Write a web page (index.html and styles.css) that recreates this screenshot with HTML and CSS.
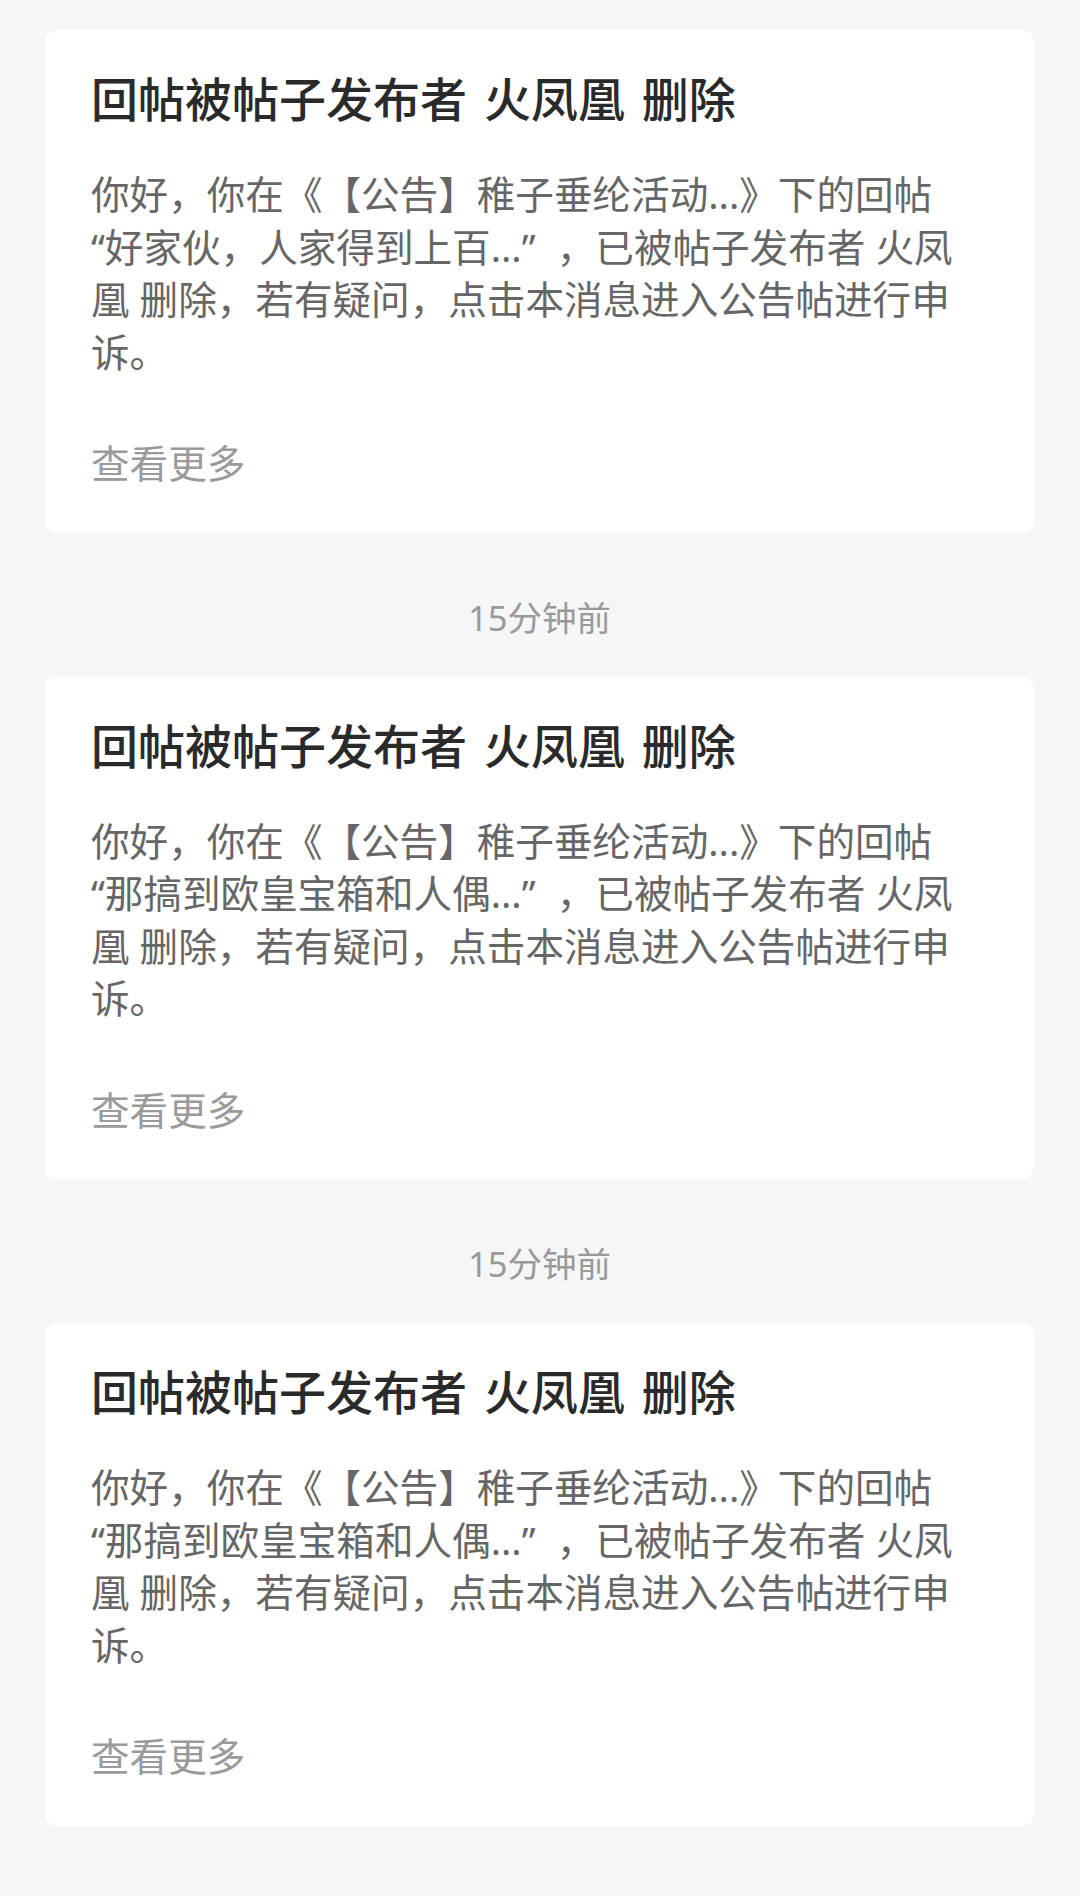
FILE: index.html
```html
<!DOCTYPE html>
<html lang="zh-CN">
<head>
<meta charset="utf-8">
<title>消息</title>
<link rel="stylesheet" href="styles.css">
</head>
<body>
<main class="list">
  <section class="card">
    <h2 class="card-title">回帖被帖子发布者 火凤凰 删除</h2>
    <p class="card-body">你好，你在《【公告】稚子垂纶活动...》下的回帖“好家伙，人家得到上百...<span class="cq">”</span>，已被帖子发布者 火凤凰 删除，若有疑问，点击本消息进入公告帖进行申诉。</p>
    <div class="card-more">查看更多</div>
  </section>
  <div class="time">15分钟前</div>
  <section class="card">
    <h2 class="card-title">回帖被帖子发布者 火凤凰 删除</h2>
    <p class="card-body">你好，你在《【公告】稚子垂纶活动...》下的回帖“那搞到欧皇宝箱和人偶...<span class="cq">”</span>，已被帖子发布者 火凤凰 删除，若有疑问，点击本消息进入公告帖进行申诉。</p>
    <div class="card-more">查看更多</div>
  </section>
  <div class="time">15分钟前</div>
  <section class="card">
    <h2 class="card-title">回帖被帖子发布者 火凤凰 删除</h2>
    <p class="card-body">你好，你在《【公告】稚子垂纶活动...》下的回帖“那搞到欧皇宝箱和人偶...<span class="cq">”</span>，已被帖子发布者 火凤凰 删除，若有疑问，点击本消息进入公告帖进行申诉。</p>
    <div class="card-more">查看更多</div>
  </section>
</main>
</body>
</html>
```

FILE: styles.css
```css
html, body {
  margin: 0;
  padding: 0;
  background: #f5f6f8;
}

body {
  font-family: "Noto Sans", "Noto Sans CJK SC", sans-serif;
  width: 1080px;
  min-height: 1896px;
}

.list {
  display: flex;
  flex-direction: column;
  padding: 30px 46px 0 45px;
}

.card {
  background: #ffffff;
  border-radius: 12px;
  padding: 36px 71px 43px 46px;
}

.card-title {
  margin: 0;
  font-size: 47px;
  line-height: 66px;
  font-weight: 500;
  color: #2a2a2a;
  word-spacing: 0.1em;
}

.card-body {
  margin: 36px 0 0 0;
  font-size: 38.6px;
  line-height: 52.5px;
  color: #666666;
  text-spacing-trim: space-all;
}

.cq {
  padding-right: 0.55em;
}

.card-more {
  margin-top: 59px;
  font-size: 38.6px;
  line-height: 52.5px;
  color: #9a9a9a;
}

.time {
  margin: 60px 0 34px 0;
  text-align: center;
  font-size: 34.5px;
  line-height: 50px;
  color: #999999;
}
```
